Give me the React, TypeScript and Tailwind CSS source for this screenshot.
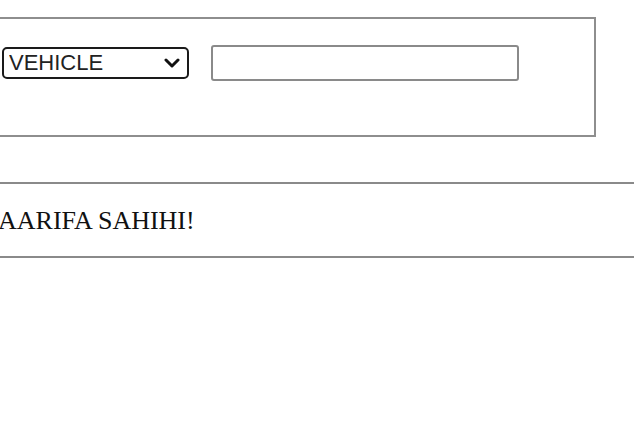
import React from "react";

export default function App() {
  return (
    <div className="w-[634px] h-[426px] overflow-hidden bg-white">
      {/* search box */}
      <div className="-ml-[10px] mt-[17px] w-[606px] h-[120px] border-2 border-[#8e8e8e] pl-[10px] pt-[26px]">
        <div className="flex items-center gap-[22px]">
          <div className="relative w-[187px] h-[32px]">
            <select
              defaultValue="VEHICLE"
              className="appearance-none w-full h-full border-2 border-[#1a1a1a] rounded-[5px] bg-white pl-[5px] text-[22px] leading-none text-[#222] outline-none"
              style={{ fontFamily: '"Liberation Sans", Arial, sans-serif' }}
            >
              <option>VEHICLE</option>
            </select>
            <svg
              className="absolute right-[9px] top-[11px] pointer-events-none"
              width="16"
              height="10"
              viewBox="0 0 16 10"
            >
              <path d="M2 2 L8 8 L14 2" fill="none" stroke="#111" strokeWidth="3" strokeLinecap="round" strokeLinejoin="round" />
            </svg>
          </div>
          <input
            type="text"
            className="w-[308px] h-[36px] border-2 border-[#8a8a8a] rounded-[3px] bg-white outline-none"
          />
        </div>
      </div>

      {/* result */}
      <div className="-mx-[10px] mt-[45px] h-[76px] border-y-2 border-[#8a8a8a] pt-[24px] pl-[8px]">
        <p
          className="text-[26px] leading-none text-[#111]"
          style={{ fontFamily: '"Liberation Serif", "Times New Roman", serif' }}
        >
          AARIFA SAHIHI!
        </p>
      </div>
    </div>
  );
}
